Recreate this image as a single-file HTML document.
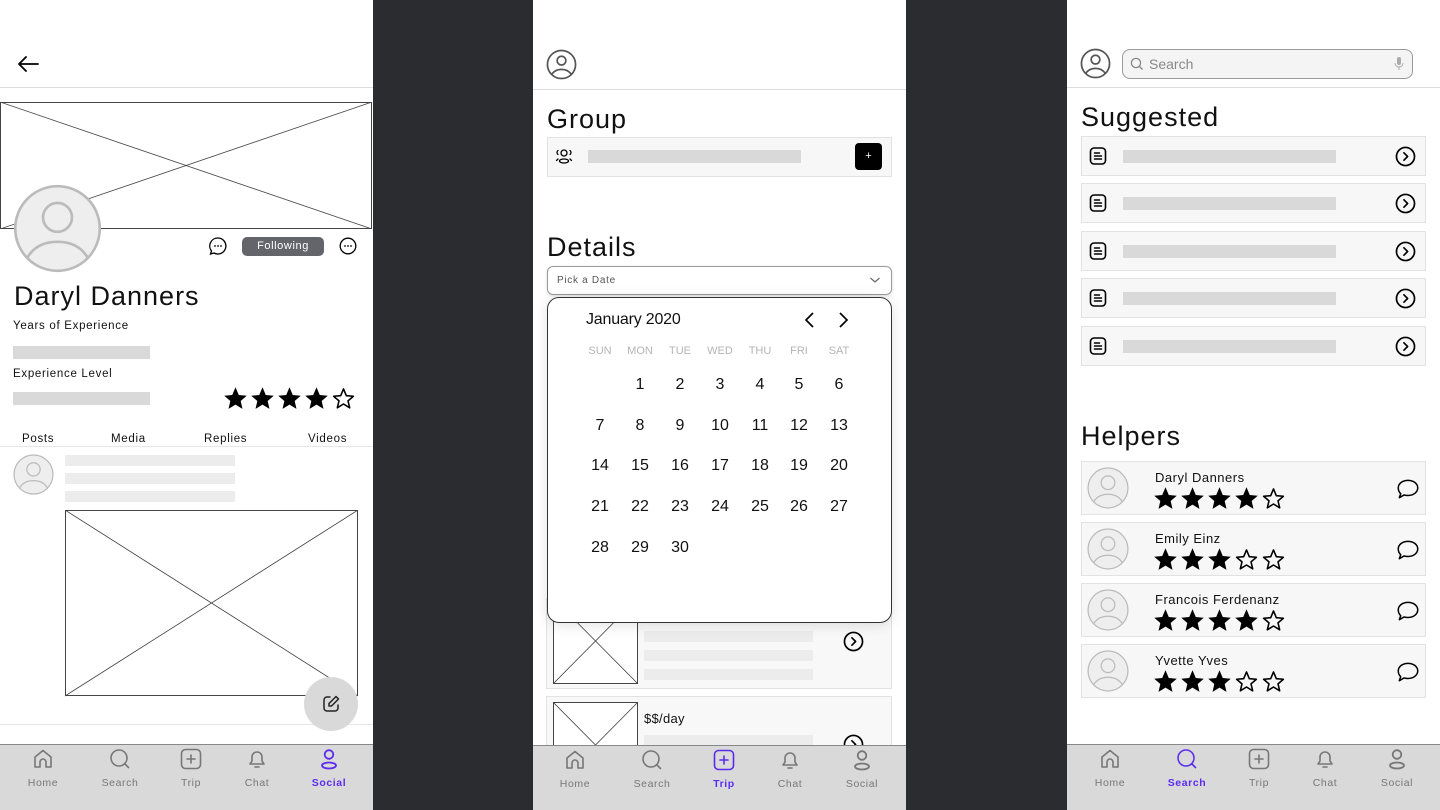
<!DOCTYPE html>
<html><head><meta charset="utf-8">
<style>
*{margin:0;padding:0;box-sizing:border-box}
body{width:1440px;height:810px;overflow:hidden;background:#2b2c30;font-family:"Liberation Sans","DejaVu Sans",sans-serif;position:relative;color:#111}
.p{position:absolute;top:0;width:373px;height:810px;background:#fff;overflow:hidden}
.a{position:absolute}
.hr{position:absolute;left:0;right:0;height:1px;background:#ddd}
.bar{position:absolute;background:#d9d9d9}
.lbar{position:absolute;background:#ececec}
.h1{position:absolute;font-size:27px;letter-spacing:1px;color:#111}
.sm{position:absolute;font-size:11.5px;letter-spacing:.7px}
.nav{position:absolute;left:0;right:0;height:66px;bottom:0;background:#d9d9d9;border-top:1px solid #888}
.ni{position:absolute;top:2px;width:60px;margin-left:-30px;text-align:center;font-size:10.5px;color:#777;letter-spacing:.6px}
.ni svg{display:block;margin:0 auto 6px}
.ni.on{color:#5b2cf0;font-weight:bold}
.cal div{position:absolute;width:40px;text-align:center;font-size:16px}
.wd{font-size:11px!important;color:#b5b5b5}
.row{position:absolute;background:#f7f7f7;border:1px solid #e2e2e2}
.hn{position:absolute;font-size:13px;letter-spacing:.5px}
</style></head><body>
<svg width="0" height="0" style="position:absolute">
<defs>
<symbol id="sf" viewBox="0 0 24 24"><path d="M12 2l2.9 6.9 7.1.6-5.4 4.7 1.6 7-6.2-3.8-6.2 3.8 1.6-7L2 9.5l7.1-.6z" fill="#000"/></symbol>
<symbol id="se" viewBox="0 0 24 24"><path d="M12 3.5l2.5 6 6.3.5-4.8 4.1 1.5 6.2-5.5-3.4-5.5 3.4 1.5-6.2-4.8-4.1 6.3-.5z" fill="none" stroke="#000" stroke-width="1.4" stroke-linejoin="round"/></symbol>
<symbol id="av" viewBox="0 0 40 40"><circle cx="20" cy="20" r="19" fill="#eee" stroke="#bbb" stroke-width="1.2"/><circle cx="20" cy="15" r="6.5" fill="none" stroke="#bbb" stroke-width="1.2"/><path d="M6.5 33c3-5 8-7 13.5-7s10.5 2 13.5 7" fill="none" stroke="#bbb" stroke-width="1.2"/></symbol>
<symbol id="avd" viewBox="0 0 32 32"><circle cx="16" cy="16" r="14.5" fill="none" stroke="#555" stroke-width="1.8"/><circle cx="16" cy="12" r="4.5" fill="none" stroke="#555" stroke-width="1.8"/><path d="M6 26c2.5-3.5 6-5 10-5s7.5 1.5 10 5" fill="none" stroke="#555" stroke-width="1.8"/></symbol>
<symbol id="chev" viewBox="0 0 20 20"><circle cx="10" cy="10" r="8.6" fill="none" stroke="#000" stroke-width="1.6"/><path d="M8.5 6.5l3.5 3.5-3.5 3.5" fill="none" stroke="#000" stroke-width="1.6" stroke-linecap="round" stroke-linejoin="round"/></symbol>
<symbol id="doc" viewBox="0 0 20 20"><rect x="2.5" y="2" width="15" height="16" rx="3.5" fill="none" stroke="#000" stroke-width="1.6"/><path d="M6.5 7h5M6.5 10h7M6.5 13h7" stroke="#000" stroke-width="1.5" stroke-linecap="round"/></symbol>
<symbol id="bub" viewBox="0 0 24 24"><path d="M12 4c5 0 9 3 9 7s-4 7-9 7c-1.3 0-2.5-.2-3.6-.5L4 20l1.3-3.7C3.8 15 3 13.1 3 11c0-4 4-7 9-7z" fill="none" stroke="#000" stroke-width="1.4" stroke-linejoin="round"/></symbol>
<symbol id="home" viewBox="0 0 24 24"><path d="M4 20V10l8-6.5 8 6.5v10h-5v-5a3 3 0 0 0-6 0v5z" fill="none" stroke="currentColor" stroke-width="1.6" stroke-linejoin="round"/></symbol>
<symbol id="srch" viewBox="0 0 24 24"><circle cx="11" cy="11" r="8" fill="none" stroke="currentColor" stroke-width="1.6"/><path d="M17 17l3.5 3.5" stroke="currentColor" stroke-width="1.6" stroke-linecap="round"/></symbol>
<symbol id="trip" viewBox="0 0 24 24"><rect x="2.5" y="2.5" width="19" height="19" rx="4" fill="none" stroke="currentColor" stroke-width="1.6"/><path d="M12 8v8M8 12h8" stroke="currentColor" stroke-width="1.6" stroke-linecap="round"/></symbol>
<symbol id="bell" viewBox="0 0 24 24"><path d="M5 17h14l-2-3V10a5 5 0 0 0-10 0v4zM10 20h4" fill="none" stroke="currentColor" stroke-width="1.6" stroke-linejoin="round" stroke-linecap="round"/></symbol>
<symbol id="soc" viewBox="0 0 24 24"><circle cx="12" cy="7.5" r="4.3" fill="none" stroke="currentColor" stroke-width="1.8"/><ellipse cx="12" cy="18.5" rx="7" ry="3" fill="none" stroke="currentColor" stroke-width="1.8"/></symbol>
</defs></svg>

<!-- PANEL 1 -->
<div class="p" style="left:0">
  <svg class="a" style="left:16px;top:54px" width="24" height="20" viewBox="0 0 24 20"><path d="M22 10H3M10 3L3 10l7 7" fill="none" stroke="#000" stroke-width="1.8" stroke-linecap="round" stroke-linejoin="round"/></svg>
  <div class="hr" style="top:87px"></div>
  <svg class="a" style="left:0;top:102px" width="373" height="127"><rect x="0.5" y="0.5" width="371" height="126" fill="#fff" stroke="#444"/><path d="M0 0L372 127M372 0L0 127" stroke="#444" stroke-width="0.8"/></svg>
  <svg class="a" style="left:13px;top:184px" width="89" height="89"><use href="#av"/></svg>
  <svg class="a" style="left:208px;top:236px" width="20" height="20" viewBox="0 0 20 20"><path d="M10 2a8 8 0 1 1-4 15l-3.5 1 1-3A8 8 0 0 1 10 2z" fill="none" stroke="#000" stroke-width="1.3"/><circle cx="7" cy="10" r=".9"/><circle cx="10" cy="10" r=".9"/><circle cx="13" cy="10" r=".9"/></svg>
  <div class="a" style="left:242px;top:237px;width:82px;height:19px;background:#63656b;border-radius:5px;color:#fff;font-size:11px;text-align:center;line-height:19px;letter-spacing:.6px">Following</div>
  <svg class="a" style="left:339px;top:237px" width="18" height="18" viewBox="0 0 18 18"><circle cx="9" cy="9" r="7.8" fill="none" stroke="#000" stroke-width="1.3"/><circle cx="6" cy="9" r=".9"/><circle cx="9" cy="9" r=".9"/><circle cx="12" cy="9" r=".9"/></svg>
  <div class="h1" style="left:14px;top:281px">Daryl Danners</div>
  <div class="sm" style="left:13px;top:320px">Years of Experience</div>
  <div class="bar" style="left:13px;top:346px;width:137px;height:13px"></div>
  <div class="sm" style="left:13px;top:368px">Experience Level</div>
  <div class="bar" style="left:13px;top:392px;width:137px;height:13px"></div>
  <div class="a" style="left:222px;top:385px;white-space:nowrap">
    <svg width="27" height="27"><use href="#sf"/></svg><svg width="27" height="27"><use href="#sf"/></svg><svg width="27" height="27"><use href="#sf"/></svg><svg width="27" height="27"><use href="#sf"/></svg><svg width="27" height="27"><use href="#se"/></svg>
  </div>
  <div class="sm" style="left:22px;top:433px">Posts</div>
  <div class="sm" style="left:111px;top:433px">Media</div>
  <div class="sm" style="left:204px;top:433px">Replies</div>
  <div class="sm" style="left:308px;top:433px">Videos</div>
  <div class="hr" style="top:446px;background:#e6e6e6"></div>
  <svg class="a" style="left:13px;top:454px" width="41" height="41"><use href="#av"/></svg>
  <div class="lbar" style="left:65px;top:455px;width:170px;height:11px"></div>
  <div class="lbar" style="left:65px;top:473px;width:170px;height:11px"></div>
  <div class="lbar" style="left:65px;top:491px;width:170px;height:11px"></div>
  <svg class="a" style="left:65px;top:510px" width="294" height="187"><rect x="0.5" y="0.5" width="292" height="185" fill="#fff" stroke="#444"/><path d="M0 0L293 186M293 0L0 186" stroke="#444" stroke-width="0.8"/></svg>
  <div class="hr" style="top:724px;background:#e6e6e6"></div>
  <div class="a" style="left:304px;top:677px;width:54px;height:54px;border-radius:50%;background:#d9d9d9"></div>
  <svg class="a" style="left:321px;top:694px" width="20" height="20" viewBox="0 0 20 20"><path d="M9 3H6a3 3 0 0 0-3 3v8a3 3 0 0 0 3 3h8a3 3 0 0 0 3-3v-3" fill="none" stroke="#222" stroke-width="1.5" stroke-linecap="round"/><path d="M15 2.5l2.5 2.5-7 7H8v-2.5z" fill="none" stroke="#222" stroke-width="1.5" stroke-linejoin="round"/></svg>
  <div class="nav" style="height:66px">
    <div class="ni" style="left:43px"><svg width="24" height="24"><use href="#home"/></svg>Home</div>
    <div class="ni" style="left:120px"><svg width="24" height="24"><use href="#srch"/></svg>Search</div>
    <div class="ni" style="left:191px"><svg width="24" height="24"><use href="#trip"/></svg>Trip</div>
    <div class="ni" style="left:257px"><svg width="24" height="24"><use href="#bell"/></svg>Chat</div>
    <div class="ni on" style="left:329px"><svg width="24" height="24"><use href="#soc"/></svg>Social</div>
  </div>
</div>

<!-- PANEL 2 -->
<div class="p" style="left:533px">
  <svg class="a" style="left:13px;top:49px" width="31" height="31"><use href="#avd"/></svg>
  <div class="hr" style="top:89px"></div>
  <div class="h1" style="left:14px;top:104px">Group</div>
  <div class="row" style="left:14px;top:137px;width:345px;height:40px"></div>
  <svg class="a" style="left:21px;top:147px" width="20" height="18" viewBox="0 0 20 18"><circle cx="10" cy="6" r="3" fill="none" stroke="#000" stroke-width="1.3"/><ellipse cx="10" cy="14" rx="4.5" ry="2" fill="none" stroke="#000" stroke-width="1.3"/><path d="M4 3.5a2.5 2.5 0 0 0 0 4M16 3.5a2.5 2.5 0 0 1 0 4M2.5 13.5l1.5-1.5M17.5 13.5L16 12" fill="none" stroke="#000" stroke-width="1.3" stroke-linecap="round"/></svg>
  <div class="bar" style="left:55px;top:150px;width:213px;height:13px"></div>
  <div class="a" style="left:322px;top:143px;width:27px;height:27px;background:#000;border-radius:4px;color:#fff;font-size:11px;text-align:center;line-height:27px">+</div>
  <div class="h1" style="left:14px;top:232px">Details</div>
  <div class="a" style="left:14px;top:266px;width:345px;height:29px;border:1px solid #9a9a9a;border-radius:6px;box-shadow:0 1px 3px rgba(0,0,0,.15)"></div>
  <div class="a" style="left:24px;top:275px;font-size:10px;color:#555;letter-spacing:.7px">Pick a Date</div>
  <svg class="a" style="left:336px;top:275px" width="12" height="10"><path d="M1.5 3l4.5 4 4.5-4" fill="none" stroke="#666" stroke-width="1.2"/></svg>

  <div class="row" style="left:13px;top:598px;width:346px;height:91px;background:#f8f8f8"></div>
  <svg class="a" style="left:20px;top:598px" width="85" height="86"><rect x="0.5" y="0.5" width="84" height="85" fill="#fff" stroke="#444"/><path d="M0 0L85 86M85 0L0 86" stroke="#444" stroke-width="0.8"/></svg>
  <div class="lbar" style="left:111px;top:631px;width:169px;height:11px"></div>
  <div class="lbar" style="left:111px;top:650px;width:169px;height:11px"></div>
  <div class="lbar" style="left:111px;top:669px;width:169px;height:11px"></div>
  <svg class="a" style="left:310px;top:631px" width="21" height="21"><use href="#chev"/></svg>
  <div class="row" style="left:13px;top:696px;width:346px;height:80px;background:#f8f8f8"></div>
  <svg class="a" style="left:20px;top:702px" width="85" height="60"><rect x="0.5" y="0.5" width="84" height="85" fill="#fff" stroke="#444"/><path d="M0 0L85 86M85 0L0 86" stroke="#444" stroke-width="0.8"/></svg>
  <div class="a" style="left:111px;top:711px;font-size:13px;letter-spacing:.3px">$$/day</div>
  <div class="lbar" style="left:111px;top:735px;width:169px;height:11px"></div>
  <svg class="a" style="left:310px;top:734px" width="21" height="21"><use href="#chev"/></svg>

  <div class="a cal" style="left:14px;top:297px;width:345px;height:326px;background:#fff;border:1px solid #333;border-radius:12px;box-shadow:0 2px 14px rgba(0,0,0,.12)">
    <div style="left:38px;top:13px;width:auto;font-size:16px;letter-spacing:-.2px">January 2020</div>
    <svg style="position:absolute;left:255px;top:13px" width="14" height="18"><path d="M10 2L3 9l7 7" fill="none" stroke="#000" stroke-width="1.7"/></svg>
    <svg style="position:absolute;left:288px;top:13px" width="14" height="18"><path d="M4 2l7 7-7 7" fill="none" stroke="#000" stroke-width="1.7"/></svg>
    <div class="wd" style="left:32px;top:47px">SUN</div><div class="wd" style="left:72px;top:47px">MON</div><div class="wd" style="left:112px;top:47px">TUE</div><div class="wd" style="left:152px;top:47px">WED</div><div class="wd" style="left:192px;top:47px">THU</div><div class="wd" style="left:231px;top:47px">FRI</div><div class="wd" style="left:271px;top:47px">SAT</div>
    <div style="left:72px;top:78px">1</div><div style="left:112px;top:78px">2</div><div style="left:152px;top:78px">3</div><div style="left:192px;top:78px">4</div><div style="left:231px;top:78px">5</div><div style="left:271px;top:78px">6</div>
    <div style="left:32px;top:119px">7</div><div style="left:72px;top:119px">8</div><div style="left:112px;top:119px">9</div><div style="left:152px;top:119px">10</div><div style="left:192px;top:119px">11</div><div style="left:231px;top:119px">12</div><div style="left:271px;top:119px">13</div>
    <div style="left:32px;top:159px">14</div><div style="left:72px;top:159px">15</div><div style="left:112px;top:159px">16</div><div style="left:152px;top:159px">17</div><div style="left:192px;top:159px">18</div><div style="left:231px;top:159px">19</div><div style="left:271px;top:159px">20</div>
    <div style="left:32px;top:200px">21</div><div style="left:72px;top:200px">22</div><div style="left:112px;top:200px">23</div><div style="left:152px;top:200px">24</div><div style="left:192px;top:200px">25</div><div style="left:231px;top:200px">26</div><div style="left:271px;top:200px">27</div>
    <div style="left:32px;top:241px">28</div><div style="left:72px;top:241px">29</div><div style="left:112px;top:241px">30</div>
  </div>

  <div class="nav" style="height:65px">
    <div class="ni" style="left:42px"><svg width="24" height="24"><use href="#home"/></svg>Home</div>
    <div class="ni" style="left:119px"><svg width="24" height="24"><use href="#srch"/></svg>Search</div>
    <div class="ni on" style="left:191px"><svg width="24" height="24"><use href="#trip"/></svg>Trip</div>
    <div class="ni" style="left:257px"><svg width="24" height="24"><use href="#bell"/></svg>Chat</div>
    <div class="ni" style="left:329px"><svg width="24" height="24"><use href="#soc"/></svg>Social</div>
  </div>
</div>

<!-- PANEL 3 -->
<div class="p" style="left:1067px">
  <svg class="a" style="left:13px;top:48px" width="31" height="31"><use href="#avd"/></svg>
  <div class="a" style="left:55px;top:49px;width:291px;height:30px;border:1px solid #999;border-radius:8px;background:#f4f4f4"></div>
  <svg class="a" style="left:63px;top:57px" width="14" height="14"><circle cx="6" cy="6" r="4.6" fill="none" stroke="#888" stroke-width="1.3"/><path d="M9.5 9.5l3 3" stroke="#888" stroke-width="1.3"/></svg>
  <div class="a" style="left:82px;top:56px;font-size:14px;color:#888">Search</div>
  <svg class="a" style="left:327px;top:56px" width="10" height="16"><rect x="3" y="1" width="4" height="8" rx="2" fill="#aaa"/><path d="M1 7a4 4 0 0 0 8 0M5 11v3" fill="none" stroke="#aaa" stroke-width="1"/></svg>
  <div class="hr" style="top:87px"></div>
  <div class="h1" style="left:14px;top:102px">Suggested</div>

  <div class="row" style="left:14px;top:136px;width:345px;height:40px"></div>
  <div class="row" style="left:14px;top:183px;width:345px;height:40px"></div>
  <div class="row" style="left:14px;top:231px;width:345px;height:40px"></div>
  <div class="row" style="left:14px;top:278px;width:345px;height:40px"></div>
  <div class="row" style="left:14px;top:326px;width:345px;height:40px"></div>
  <svg class="a" style="left:21px;top:146px" width="20" height="20"><use href="#doc"/></svg>
  <svg class="a" style="left:21px;top:193px" width="20" height="20"><use href="#doc"/></svg>
  <svg class="a" style="left:21px;top:241px" width="20" height="20"><use href="#doc"/></svg>
  <svg class="a" style="left:21px;top:288px" width="20" height="20"><use href="#doc"/></svg>
  <svg class="a" style="left:21px;top:336px" width="20" height="20"><use href="#doc"/></svg>
  <div class="bar" style="left:56px;top:150px;width:213px;height:13px"></div>
  <div class="bar" style="left:56px;top:197px;width:213px;height:13px"></div>
  <div class="bar" style="left:56px;top:245px;width:213px;height:13px"></div>
  <div class="bar" style="left:56px;top:292px;width:213px;height:13px"></div>
  <div class="bar" style="left:56px;top:340px;width:213px;height:13px"></div>
  <svg class="a" style="left:328px;top:146px" width="21" height="21"><use href="#chev"/></svg>
  <svg class="a" style="left:328px;top:193px" width="21" height="21"><use href="#chev"/></svg>
  <svg class="a" style="left:328px;top:241px" width="21" height="21"><use href="#chev"/></svg>
  <svg class="a" style="left:328px;top:288px" width="21" height="21"><use href="#chev"/></svg>
  <svg class="a" style="left:328px;top:336px" width="21" height="21"><use href="#chev"/></svg>

  <div class="h1" style="left:14px;top:421px">Helpers</div>

  <div class="row" style="left:14px;top:461px;width:345px;height:54px"></div>
  <svg class="a" style="left:20px;top:467px" width="42" height="42"><use href="#av"/></svg>
  <div class="hn" style="left:88px;top:470px">Daryl Danners</div>
  <div class="a" style="left:85px;top:485px;white-space:nowrap"><svg width="27" height="27"><use href="#sf"/></svg><svg width="27" height="27"><use href="#sf"/></svg><svg width="27" height="27"><use href="#sf"/></svg><svg width="27" height="27"><use href="#sf"/></svg><svg width="27" height="27"><use href="#se"/></svg></div>
  <svg class="a" style="left:328px;top:476px" width="26" height="26"><use href="#bub"/></svg>

  <div class="row" style="left:14px;top:522px;width:345px;height:54px"></div>
  <svg class="a" style="left:20px;top:528px" width="42" height="42"><use href="#av"/></svg>
  <div class="hn" style="left:88px;top:531px">Emily Einz</div>
  <div class="a" style="left:85px;top:546px;white-space:nowrap"><svg width="27" height="27"><use href="#sf"/></svg><svg width="27" height="27"><use href="#sf"/></svg><svg width="27" height="27"><use href="#sf"/></svg><svg width="27" height="27"><use href="#se"/></svg><svg width="27" height="27"><use href="#se"/></svg></div>
  <svg class="a" style="left:328px;top:537px" width="26" height="26"><use href="#bub"/></svg>

  <div class="row" style="left:14px;top:583px;width:345px;height:54px"></div>
  <svg class="a" style="left:20px;top:589px" width="42" height="42"><use href="#av"/></svg>
  <div class="hn" style="left:88px;top:592px">Francois Ferdenanz</div>
  <div class="a" style="left:85px;top:607px;white-space:nowrap"><svg width="27" height="27"><use href="#sf"/></svg><svg width="27" height="27"><use href="#sf"/></svg><svg width="27" height="27"><use href="#sf"/></svg><svg width="27" height="27"><use href="#sf"/></svg><svg width="27" height="27"><use href="#se"/></svg></div>
  <svg class="a" style="left:328px;top:598px" width="26" height="26"><use href="#bub"/></svg>

  <div class="row" style="left:14px;top:644px;width:345px;height:54px"></div>
  <svg class="a" style="left:20px;top:650px" width="42" height="42"><use href="#av"/></svg>
  <div class="hn" style="left:88px;top:653px">Yvette Yves</div>
  <div class="a" style="left:85px;top:668px;white-space:nowrap"><svg width="27" height="27"><use href="#sf"/></svg><svg width="27" height="27"><use href="#sf"/></svg><svg width="27" height="27"><use href="#sf"/></svg><svg width="27" height="27"><use href="#se"/></svg><svg width="27" height="27"><use href="#se"/></svg></div>
  <svg class="a" style="left:328px;top:659px" width="26" height="26"><use href="#bub"/></svg>

  <div class="nav" style="height:66px">
    <div class="ni" style="left:43px"><svg width="24" height="24"><use href="#home"/></svg>Home</div>
    <div class="ni on" style="left:120px"><svg width="24" height="24"><use href="#srch"/></svg>Search</div>
    <div class="ni" style="left:192px"><svg width="24" height="24"><use href="#trip"/></svg>Trip</div>
    <div class="ni" style="left:258px"><svg width="24" height="24"><use href="#bell"/></svg>Chat</div>
    <div class="ni" style="left:330px"><svg width="24" height="24"><use href="#soc"/></svg>Social</div>
  </div>
</div>
</body></html>
